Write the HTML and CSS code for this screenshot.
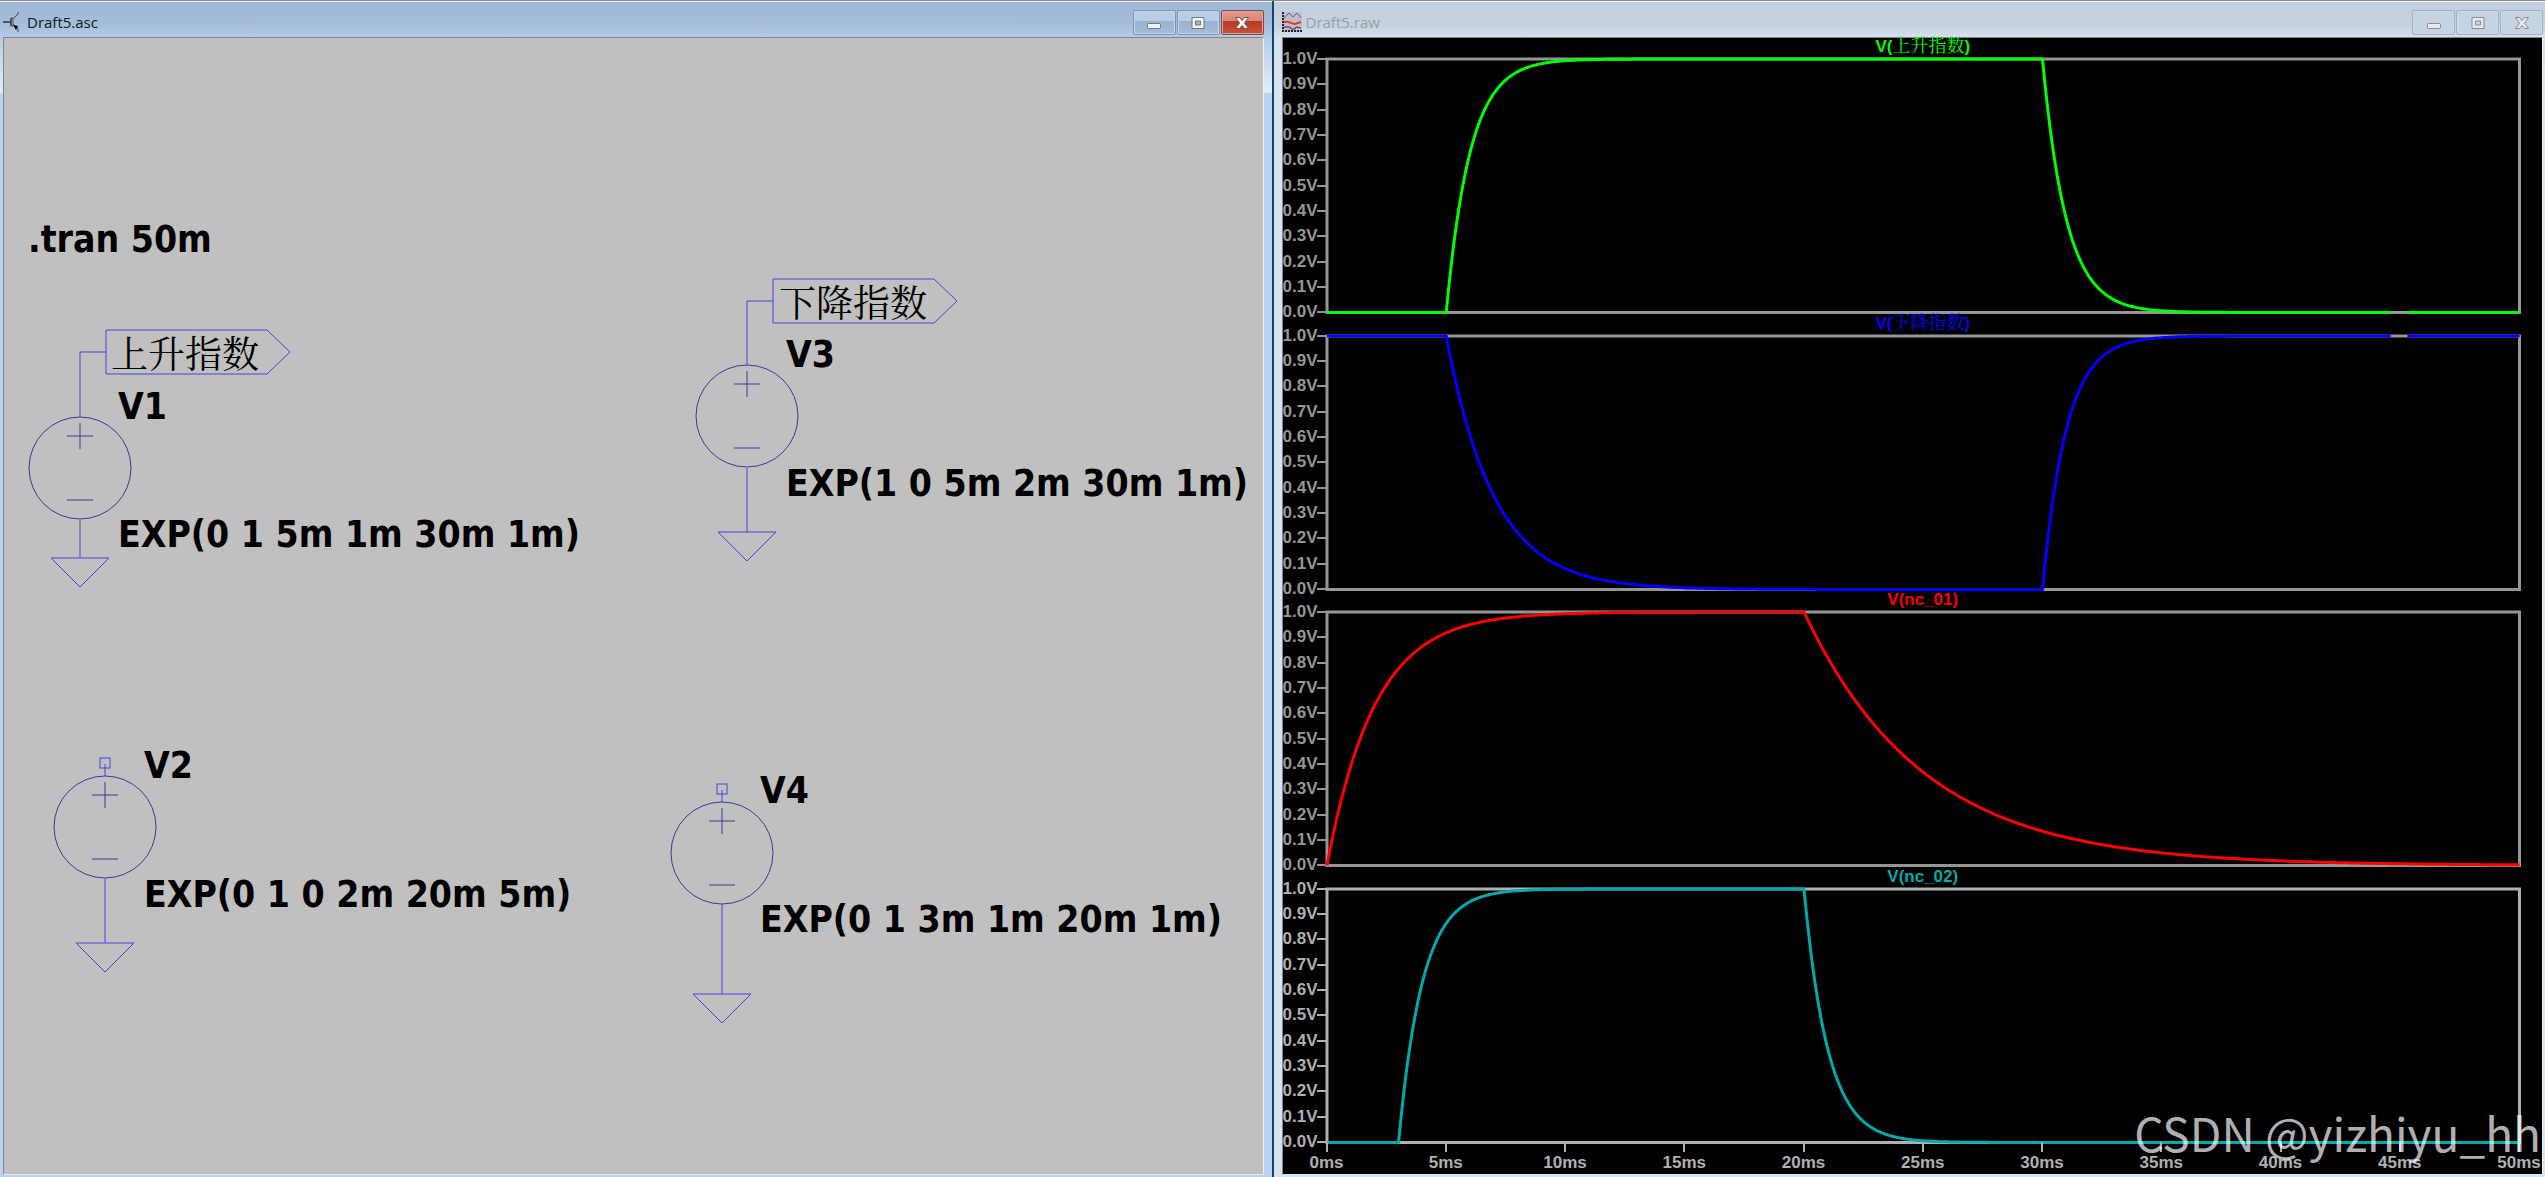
FILE: index.html
```html
<!DOCTYPE html>
<html lang="zh-CN">
<head>
<meta charset="utf-8">
<title>Draft5</title>
<link rel="stylesheet" href="styles.css">
</head>
<body>
<main class="workspace">
  <section class="window window-active" aria-label="Draft5.asc">
    <header class="titlebar">
      <svg class="app-icon" width="20" height="20" viewBox="0 0 20 20" aria-hidden="true">
        <path d="M0 10H8M8 6V14" fill="none" stroke="#333" stroke-width="1.5"/>
        <path d="M8 6H10V14H8" fill="none" stroke="#555"/>
        <path d="M10 7L15 2V0M10 12L15 17V20" fill="none" stroke="#444"/>
        <path d="M10 13L15 14L13 18Z" fill="#000"/>
      </svg>
      <h1 class="title">Draft5.asc</h1>
      <div class="controls">
        <button class="control" type="button" aria-label="Minimize"><svg width="16" height="14" viewBox="0 0 16 14"><rect x="1.500" y="7.500" width="13" height="5" rx="1" fill="#f2f2f2" stroke="#6d7683"/></svg></button>
        <button class="control" type="button" aria-label="Maximize"><svg width="16" height="14" viewBox="0 0 16 14"><path fill-rule="evenodd" d="M2 1.500H14V12.500H2ZM5.500 5V9H10.500V5Z" fill="#f2f2f2" stroke="#6d7683"/></svg></button>
        <button class="control control-close" type="button" aria-label="Close"><svg width="16" height="14" viewBox="0 0 16 14"><path d="M1.500 1.500H5.500L8 4.500L10.500 1.500H14.500L10.500 7L14.500 12.500H10.500L8 9.500L5.500 12.500H1.500L5.500 7Z" fill="#f4f4f4" stroke="#6a5560"/></svg></button>
      </div>
    </header>
    <div class="client">
      <!-- Schematic canvas: symbols and their captions, in sheet coordinates -->
      <svg class="schematic" role="img" aria-label="Schematic">
        <defs>
          <g id="source">
            <circle r="51"/>
            <path d="M-13 -32H13M0 -45V-19M-13 32H13"/>
          </g>
          <path id="ground" d="M-29 0H29L0 29Z"/>
          <path id="flag" d="M0 -22H161L184 0L161 22H0Z"/>
          <rect id="pin" x="-5" y="-5" width="10" height="10"/>
        </defs>

        <text class="caption" x="24" y="214">.tran 50m</text>

        <g class="wire">
          <path d="M76 379V314H102M76 482V520"/>
          <use href="#flag" x="102" y="314"/>
          <use href="#ground" x="76" y="520"/>
        </g>
        <use class="part" href="#source" x="76" y="430"/>
        <text class="net" x="107" y="330">上升指数</text>
        <text class="caption" x="114" y="381">V1</text>
        <text class="caption" x="114" y="509">EXP(0 1 5m 1m 30m 1m)</text>

        <g class="wire">
          <path d="M743 327V263H769M743 430V494"/>
          <use href="#flag" x="769" y="263"/>
          <use href="#ground" x="743" y="494"/>
        </g>
        <use class="part" href="#source" x="743" y="378"/>
        <text class="net" x="775" y="279">下降指数</text>
        <text class="caption" x="782" y="329">V3</text>
        <text class="caption" x="782" y="458">EXP(1 0 5m 2m 30m 1m)</text>

        <g class="wire">
          <path d="M101 726V738M101 841V905"/>
          <use href="#pin" x="101" y="725"/>
          <use href="#ground" x="101" y="905"/>
        </g>
        <use class="part" href="#source" x="101" y="789"/>
        <text class="caption" x="140" y="740">V2</text>
        <text class="caption" x="140" y="869">EXP(0 1 0 2m 20m 5m)</text>

        <g class="wire">
          <path d="M718 752V764M718 866V956"/>
          <use href="#pin" x="718" y="751"/>
          <use href="#ground" x="718" y="956"/>
        </g>
        <use class="part" href="#source" x="718" y="815"/>
        <text class="caption" x="756" y="765">V4</text>
        <text class="caption" x="756" y="894">EXP(0 1 3m 1m 20m 1m)</text>
      </svg>
    </div>
  </section>

  <section class="window window-idle" aria-label="Draft5.raw">
    <header class="titlebar">
      <svg class="app-icon" width="20" height="20" viewBox="0 0 20 20" aria-hidden="true">
        <rect width="20" height="20" fill="#c0c0c0"/>
        <path d="M1 0V19H20" fill="none" stroke="#222" stroke-width="2" stroke-dasharray="2 1"/>
        <path d="M2 6L7 1L11 5L15 1L19 6" fill="none" stroke="#5555e0"/>
        <path d="M2 10C7 9 9 12 13 12L19 10" fill="none" stroke="#f03030" stroke-width="2"/>
        <path d="M2 15H8L9 17H13L14 15L19 16" fill="none" stroke="#202080"/>
      </svg>
      <h1 class="title">Draft5.raw</h1>
      <div class="controls">
        <button class="control" type="button" aria-label="Minimize"><svg width="16" height="14" viewBox="0 0 16 14"><rect x="1.500" y="7.500" width="13" height="5" rx="1" fill="#e8e8e8" stroke="#858d99"/></svg></button>
        <button class="control" type="button" aria-label="Maximize"><svg width="16" height="14" viewBox="0 0 16 14"><path fill-rule="evenodd" d="M2 1.500H14V12.500H2ZM5.500 5V9H10.500V5Z" fill="#e8e8e8" stroke="#858d99"/></svg></button>
        <button class="control" type="button" aria-label="Close"><svg width="16" height="14" viewBox="0 0 16 14"><path d="M1.500 1.500H5.500L8 4.500L10.500 1.500H14.500L10.500 7L14.500 12.500H10.500L8 9.500L5.500 12.500H1.500L5.500 7Z" fill="#e8e8e8" stroke="#858d99"/></svg></button>
      </div>
    </header>
    <div class="client waveforms" id="waveforms"></div>
    <p class="watermark">CSDN @yizhiyu_hh</p>
  </section>
</main>
<script src="plots.js"></script>
</body>
</html>
```

FILE: styles.css
```css
* { box-sizing: border-box; }

body {
  margin: 0;
  background: #0f4a5c;
  font-family: "Liberation Sans", Arial, sans-serif;
}

.workspace {
  display: grid;
  grid-template-columns: 1fr 1fr;
  gap: 2px;
  min-height: 100vh;
  border-top: 1px solid #8a8a8a;
}

.window {
  position: relative;
  display: flex;
  flex-direction: column;
  min-width: 0;
  border-top: 1px solid #eef3f8;
}

.window-active {
  padding: 0 8px 2px 3px;
  background: linear-gradient(#9db7d5 0, #a5bedb 24px, #b6cde9 36px, #e2edf8 90px, #bad3ee 92px);
}

.window-idle {
  padding: 0 2px 2px 8px;
  background: linear-gradient(#c3cfdc 0, #c6d2df 24px, #d6e2f0 36px, #d8e4f2 92px);
}

.titlebar {
  display: flex;
  align-items: center;
  gap: 4px;
  height: 35px;
}

.title {
  flex: 1;
  margin: 0;
  padding-top: 5px;
  font: 400 15px/24px "Open Sans", "Noto Sans", sans-serif;
  color: #101820;
}

.app-icon { margin-top: 5px; }
.window-idle .title { color: #999fa6; }

.controls {
  display: flex;
  gap: 1px;
  padding-top: 6px;
}

.control {
  display: grid;
  place-items: center;
  width: 43px;
  height: 25px;
  padding: 0;
  border: 1px solid #7d95b3;
  border-radius: 2px;
  background: linear-gradient(#b9cde4 45%, #9ab3d0 45%, #a3bcd9);
  box-shadow: inset 0 0 0 1px #c5d6ea;
}

.window-idle .control {
  border-color: #a3b1c4;
  background: #c5d3e3;
  box-shadow: inset 0 0 0 1px #ccd8e6;
}

.window .control-close {
  border-color: #7a4a50;
  background: linear-gradient(#e09a8e, #d98478 45%, #b93a22 45%, #c65440);
  box-shadow: inset 0 0 0 1px #e3a497;
}

.client {
  flex: 1;
  display: flex;
  flex-direction: column;
  border: 1px solid #858585;
  border-right-color: #f0f0f0;
  border-bottom-color: #e4e8ee;
  background: #c0c0c0;
}

/* Schematic */
.schematic {
  flex: 1;
  width: 100%;
  fill: none;
}

.wire { stroke: #4444e0; }
.part { stroke: #3a3a98; }

.caption {
  fill: #000;
  font: 700 37px "DejaVu Sans Condensed", "DejaVu Sans", sans-serif;
}

.net {
  fill: #000;
  font: 400 37px "Noto Serif CJK SC", "Noto Sans CJK SC", serif;
}

/* Waveform panes */
.waveforms {
  padding: 0 23px 0 0;
  background: #000;
  color: #969696;
  font-size: 17px;
  font-weight: 700;
  line-height: 18px;
}

.pane {
  flex: 1 1 23px;
  display: grid;
  grid-template: 23px 1fr / 44px 1fr;
}

.pane:first-child {
  flex-basis: 21px;
  grid-template-rows: 21px 1fr;
}

.pane:nth-child(4) { color: #b0b0b0; }

.trace-name {
  grid-column: 2;
  margin: 0;
  align-self: end;
  height: 21px;
  text-align: center;
  font: 700 17px/18px "Liberation Sans", sans-serif;
}

.trace-name span {
  font: 400 18px/1px "Noto Serif CJK SC", "Noto Sans CJK SC", serif;
}

.y-axis {
  grid-column: 1;
  display: flex;
  flex-direction: column;
  justify-content: space-between;
  margin: -9px 0;
  padding: 0;
  list-style: none;
}

.y-axis li {
  display: flex;
  align-items: center;
  height: 18px;
}

.y-axis li::after {
  content: "";
  flex: 1;
  height: 2px;
  background: currentColor;
}

.plot {
  grid-column: 2;
  width: 100%;
  height: 100%;
  min-height: 0;
  overflow: visible;
  fill: none;
}

.frame { stroke: currentColor; stroke-width: 3px; vector-effect: non-scaling-stroke; }
.trace { stroke-width: 3px; vector-effect: non-scaling-stroke; stroke-linejoin: round; }

.x-axis {
  display: flex;
  justify-content: space-between;
  height: 32px;
  margin: 0 -22px 0 22px;
  padding: 0;
  color: #b0b0b0;
  list-style: none;
}

.x-axis li {
  display: flex;
  flex-direction: column;
  align-items: center;
  gap: 2px;
  width: 44px;
}

.x-axis li::before {
  content: "";
  width: 2px;
  height: 10px;
  background: currentColor;
}

.watermark {
  position: absolute;
  right: 4px;
  bottom: 15px;
  margin: 0;
  color: rgba(255, 255, 255, .7);
  font: 400 46px/60px "Noto Sans CJK SC", sans-serif;
  pointer-events: none;
}
```

FILE: plots.js
```javascript
// EXP(V1 V2 Td1 Tau1 Td2 Tau2) sources, times in milliseconds.
const traces = [
  { name: "V(<span>上升指数</span>)", color: "#00ff00", exp: [0, 1, 5, 1, 30, 1], skip: [44.6, 45.3] },
  { name: "V(<span>下降指数</span>)", color: "#0000ff", exp: [1, 0, 5, 2, 30, 1], skip: [44.6, 45.3] },
  { name: "V(nc_01)", color: "#ff0000", exp: [0, 1, 0, 2, 20, 5] },
  { name: "V(nc_02)", color: "#00aaaa", exp: [0, 1, 3, 1, 20, 1] }
];
const span = 50;

function level(t, [v1, v2, td1, tau1, td2, tau2]) {
  let v = v1;
  if (t > td1) v += (v2 - v1) * (1 - Math.exp(-(t - td1) / tau1));
  if (t > td2) v += (v1 - v2) * (1 - Math.exp(-(t - td2) / tau2));
  return v;
}

function tracePath({ exp, skip }) {
  let d = "";
  let pen = "M";
  for (let i = 0; i <= span * 10; i++) {
    const t = i / 10;
    if (skip && t > skip[0] && t < skip[1]) { pen = "M"; continue; }
    d += `${pen}${t} ${(1 - level(t, exp)).toFixed(4)}`;
    pen = "L";
  }
  return d;
}

const volts = Array.from({ length: 11 }, (_, i) => `<li>${(1 - i / 10).toFixed(1)}V</li>`).join("");
const times = Array.from({ length: 11 }, (_, i) => `<li>${i * 5}ms</li>`).join("");

document.getElementById("waveforms").innerHTML = traces.map(trace => `
  <section class="pane">
    <h2 class="trace-name" style="color:${trace.color}">${trace.name}</h2>
    <ul class="y-axis">${volts}</ul>
    <svg class="plot" viewBox="0 0 ${span} 1" preserveAspectRatio="none">
      <rect class="frame" width="${span}" height="1"/>
      <path class="trace" stroke="${trace.color}" d="${tracePath(trace)}"/>
    </svg>
  </section>`).join("") + `<ul class="x-axis">${times}</ul>`;
```
